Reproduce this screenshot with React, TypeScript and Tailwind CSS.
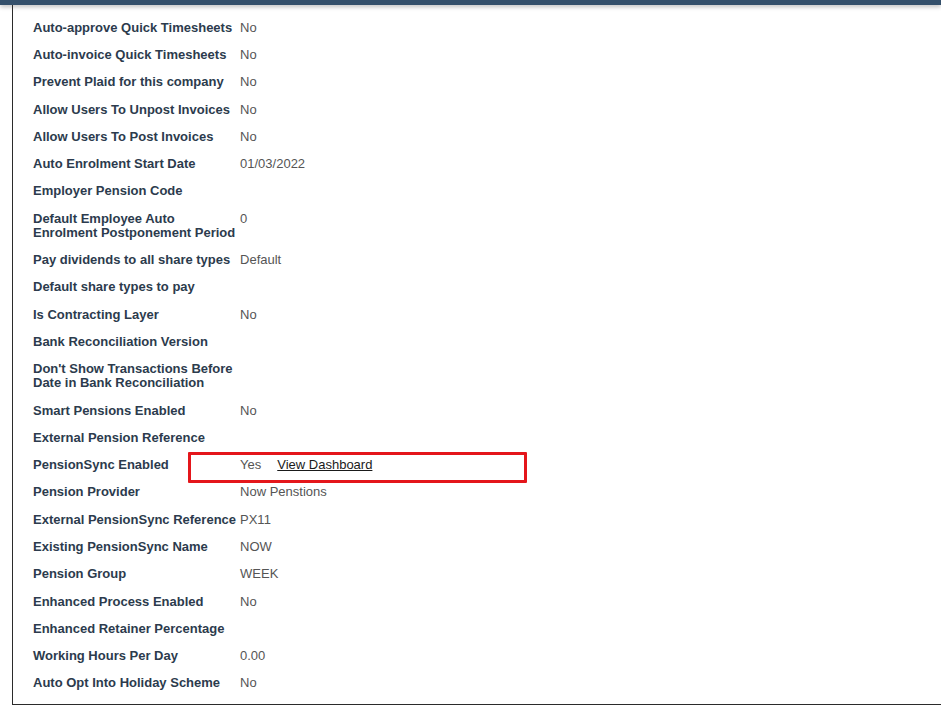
import type { ReactNode } from "react";

type Row = { label: ReactNode; value?: ReactNode; tall?: boolean };

const rows: Row[] = [
    { label: "Auto-approve Quick Timesheets", value: "No" },
    { label: "Auto-invoice Quick Timesheets", value: "No" },
    { label: "Prevent Plaid for this company", value: "No" },
    { label: "Allow Users To Unpost Invoices", value: "No" },
    { label: "Allow Users To Post Invoices", value: "No" },
    { label: "Auto Enrolment Start Date", value: "01/03/2022" },
    { label: "Employer Pension Code" },
    { label: <>Default Employee Auto<br />Enrolment Postponement Period</>, value: "0", tall: true },
    { label: "Pay dividends to all share types", value: "Default" },
    { label: "Default share types to pay" },
    { label: "Is Contracting Layer", value: "No" },
    { label: "Bank Reconciliation Version" },
    { label: <>Don't Show Transactions Before<br />Date in Bank Reconciliation</>, tall: true },
    { label: "Smart Pensions Enabled", value: "No" },
    { label: "External Pension Reference" },
    {
        label: "PensionSync Enabled",
        value: (
            <span className="relative inline-flex items-center gap-[16px]">
                <span>Yes</span>
                <a href="#" className="text-[#1a1a1a] underline">View Dashboard</a>
                {/* red highlight box drawn over the row */}
                <span className="pointer-events-none absolute left-[-52px] top-[-6px] h-[31px] w-[339px] border-[3px] border-[#e4161b] rounded-[1px]" />
            </span>
        ),
    },
    { label: "Pension Provider", value: "Now Penstions" },
    { label: "External PensionSync Reference", value: "PX11" },
    { label: "Existing PensionSync Name", value: "NOW" },
    { label: "Pension Group", value: "WEEK" },
    { label: "Enhanced Process Enabled", value: "No" },
    { label: "Enhanced Retainer Percentage" },
    { label: "Working Hours Per Day", value: "0.00" },
    { label: "Auto Opt Into Holiday Scheme", value: "No" },
];

export default function App() {
    return (
        <div className="w-[941px] h-[720px] bg-white overflow-hidden flex flex-col font-['Liberation_Sans',Arial,sans-serif]">
            <div className="h-[5px] bg-[#34506b] shadow-[0_2px_4px_rgba(0,0,0,0.25)] shrink-0" />
            <div className="ml-[12px] h-[700px] border-l border-b border-[#2b2b2b] pl-[20px] pt-[9px]">
                <table className="border-collapse text-[13px] leading-[14px]">
                    <tbody>
                        {rows.map((r, i) => (
                            <tr key={i} className={r.tall ? "h-[41.3px]" : "h-[27.3px]"}>
                                <td className="w-[207px] pr-[4px] align-middle font-bold text-[#2c3b4d] whitespace-nowrap">
                                    {r.label}
                                </td>
                                <td className={`align-middle text-[#555] ${r.tall ? "pb-[14px]" : ""}`}>
                                    {r.value}
                                </td>
                            </tr>
                        ))}
                    </tbody>
                </table>
            </div>
        </div>
    );
}
